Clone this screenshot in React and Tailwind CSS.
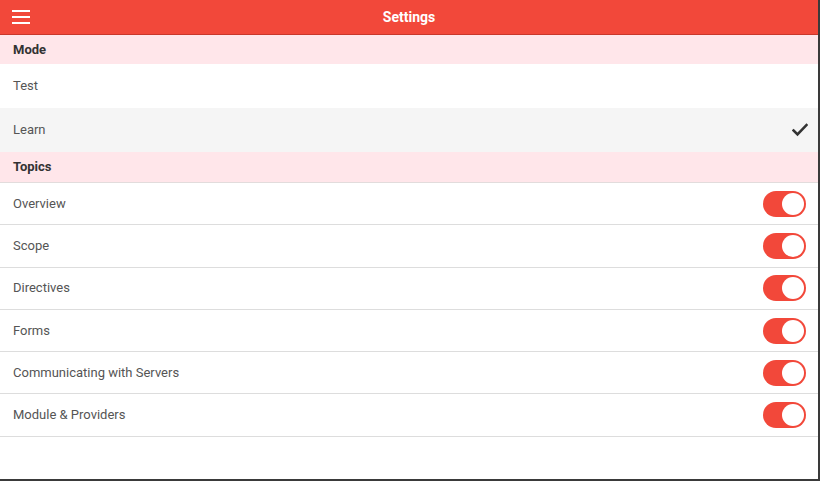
import React from "react";

const topics = [
  "Overview",
  "Scope",
  "Directives",
  "Forms",
  "Communicating with Servers",
  "Module & Providers",
];

function Toggle() {
  return (
    <div className="relative h-[26px] w-[43px] rounded-full bg-[#f2483a]">
      <div className="absolute right-[2px] top-[2px] h-[22px] w-[22px] rounded-full bg-white" />
    </div>
  );
}

function Check() {
  return (
    <svg width="16" height="14" viewBox="0 0 16 14" fill="none">
      <path d="M1.5 7.5 L5.5 11.5 L14.5 2" stroke="#333" strokeWidth="2.6" strokeLinecap="square" />
    </svg>
  );
}

export default function App() {
  return (
    <div
      className="flex h-[481px] w-[820px] flex-col overflow-hidden border-b-2 border-r-2 border-[#3a3a3a] bg-white"
      style={{ fontFamily: "Roboto, 'Liberation Sans', sans-serif" }}
    >
      <header className="relative flex h-[35px] shrink-0 items-center justify-center border-b border-[#c9372b] bg-[#f2483a]">
        <div className="absolute left-[12px] top-[10px] flex w-[18px] flex-col gap-[4px]">
          <span className="h-[2px] w-full bg-white" />
          <span className="h-[2px] w-full bg-white" />
          <span className="h-[2px] w-full bg-white" />
        </div>
        <span className="text-[14px] font-bold text-white">Settings</span>
      </header>

      <div className="flex h-[29px] shrink-0 items-center bg-[#ffe6ea] px-[13px] text-[13px] font-bold text-[#333]">
        Mode
      </div>
      <div className="flex h-[44px] shrink-0 items-center bg-white px-[13px] text-[13px] text-[#555]">
        Test
      </div>
      <div className="flex h-[44px] shrink-0 items-center justify-between bg-[#f5f5f5] pl-[13px] pr-[10px] text-[13px] text-[#555]">
        <span>Learn</span>
        <Check />
      </div>
      <div className="flex h-[31px] shrink-0 items-center border-b border-[#e2dcdc] bg-[#ffe6ea] px-[13px] text-[13px] font-bold text-[#333]">
        Topics
      </div>

      {topics.map((t) => (
        <div
          key={t}
          className="flex h-[42.3px] shrink-0 items-center justify-between border-b border-[#dddddd] pl-[13px] pr-[12px] text-[13px] text-[#555]"
        >
          <span>{t}</span>
          <Toggle />
        </div>
      ))}
    </div>
  );
}
